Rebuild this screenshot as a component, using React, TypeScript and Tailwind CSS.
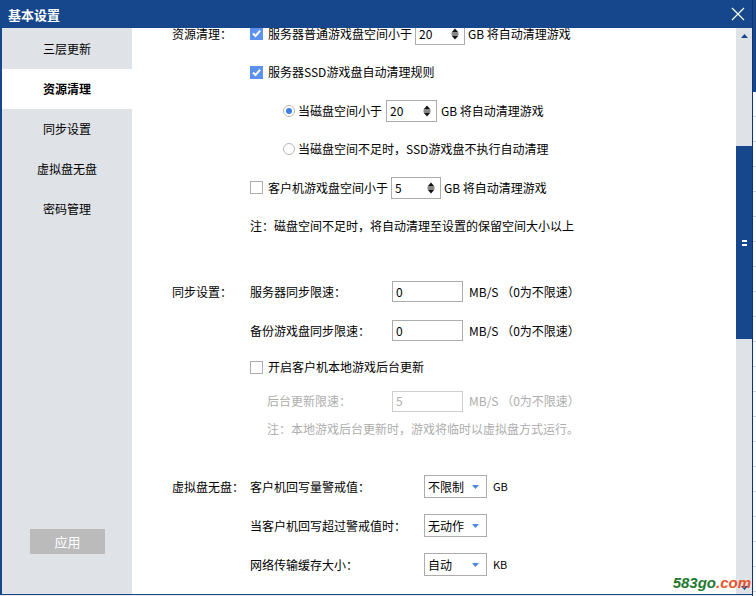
import React from 'react';

const BLUE = 'bg-[#16468b]';

function Check({ on }: { on?: boolean }) {
  if (!on) return <span className="w-[13px] h-[13px] border border-[#adadad] bg-white shrink-0" />;
  return (
    <span className="w-[13px] h-[13px] bg-[#5b92f0] flex items-center justify-center shrink-0">
      <svg width="11" height="11" viewBox="0 0 11 11">
        <path d="M2 5.5 L4.5 8 L9.2 2.6" stroke="#fff" strokeWidth="2" fill="none" />
      </svg>
    </span>
  );
}

function Radio({ on }: { on?: boolean }) {
  return (
    <span className="w-[12px] h-[12px] rounded-full border border-[#b8b8b8] bg-white flex items-center justify-center shrink-0">
      {on && <span className="w-[6px] h-[6px] rounded-full bg-[#3d7fe6]" />}
    </span>
  );
}

function Spin({ v, w }: { v: string; w: string }) {
  return (
    <div className={`${w} h-[22px] border border-[#acacac] bg-white flex items-center justify-between pl-[3px] pr-[5px] shrink-0`}>
      <span>{v}</span>
      <svg width="8" height="12" viewBox="0 0 8 12">
        <path d="M0.5 4.5 L4 0.5 L7.5 4.5Z M0.5 7.5 L7.5 7.5 L4 11.5Z" fill="#111" />
        <rect x="0.5" y="5.5" width="7" height="1" fill="#111" />
      </svg>
    </div>
  );
}

function Field({ v, dim }: { v: string; dim?: boolean }) {
  return (
    <div className={`w-[71px] h-[21px] border bg-white flex items-center pl-[3px] shrink-0 ${dim ? 'border-[#cfcfcf] text-[#adadad]' : 'border-[#acacac]'}`}>
      {v}
    </div>
  );
}

function Select({ v }: { v: string }) {
  return (
    <div className="w-[63px] h-[23px] border border-[#acacac] bg-white flex items-center justify-between pl-[3px] pr-[7px] shrink-0">
      <span>{v}</span>
      <svg width="7" height="4" viewBox="0 0 7 4">
        <path d="M0 0 H7 L3.5 4Z" fill="#4a88de" />
      </svg>
    </div>
  );
}

const menu = ['三层更新', '资源清理', '同步设置', '虚拟盘无盘', '密码管理'];

export default function App() {
  return (
    <div className="relative w-[756px] h-[596px] flex bg-[#e9e9e9] overflow-hidden text-[12px] text-black font-['Noto_Sans_CJK_SC',sans-serif] leading-none">
      <div className="w-[752px] h-[595px] flex flex-col border-l-2 border-b border-[#16468b] bg-white">
        {/* title */}
        <div className={`h-[28px] ${BLUE} flex items-center justify-between pl-[6px] pr-[7px] shrink-0`}>
          <span className="text-white font-bold text-[13px]">基本设置</span>
          <svg width="14" height="14" viewBox="0 0 14 14">
            <path d="M1 1 L13 13 M13 1 L1 13" stroke="#fff" strokeWidth="1.2" />
          </svg>
        </div>

        <div className="flex flex-1 min-h-0">
          {/* sidebar */}
          <div className="w-[130px] bg-[#dfe2e7] flex flex-col pt-[1px] shrink-0">
            {menu.map((m, i) => (
              <div
                key={m}
                className={`h-[40px] flex items-center justify-center ${i === 1 ? 'bg-white font-bold' : ''}`}
              >
                {m}
              </div>
            ))}
            <div className="mt-auto mb-[40px] ml-[28px] w-[75px] h-[25px] bg-[#bbbbbb] text-white flex items-center justify-center text-[13px]">
              应用
            </div>
          </div>

          {/* content */}
          <div className="flex-1 overflow-hidden pl-[40px]">
            <div className="-mt-[14px]">
              {/* 资源清理 */}
              <div className="flex">
                <div className="w-[78px] h-[39px] flex items-center">资源清理：</div>
                <div className="flex flex-col">
                  <div className="h-[39px] flex items-center">
                    <Check on />
                    <span className="ml-[5px]">服务器普通游戏盘空间小于</span>
                    <div className="ml-[3px]"><Spin v="20" w="w-[50px]" /></div>
                    <span className="ml-[3px]">GB 将自动清理游戏</span>
                  </div>
                  <div className="h-[38px] flex items-center">
                    <Check on />
                    <span className="ml-[5px]">服务器SSD游戏盘自动清理规则</span>
                  </div>
                  <div className="h-[39px] flex items-center pl-[33px]">
                    <Radio on />
                    <span className="ml-[3px]">当磁盘空间小于</span>
                    <div className="ml-[4px]"><Spin v="20" w="w-[51px]" /></div>
                    <span className="ml-[4px]">GB 将自动清理游戏</span>
                  </div>
                  <div className="h-[38px] flex items-center pl-[33px]">
                    <Radio />
                    <span className="ml-[3px]">当磁盘空间不足时，SSD游戏盘不执行自动清理</span>
                  </div>
                  <div className="h-[39px] flex items-center">
                    <Check />
                    <span className="ml-[5px]">客户机游戏盘空间小于</span>
                    <div className="ml-[3px]"><Spin v="5" w="w-[50px]" /></div>
                    <span className="ml-[3px]">GB 将自动清理游戏</span>
                  </div>
                  <div className="h-[38px] flex items-center">
                    注：磁盘空间不足时，将自动清理至设置的保留空间大小以上
                  </div>
                </div>
              </div>

              {/* 同步设置 */}
              <div className="flex mt-[27px]">
                <div className="w-[78px] h-[39px] flex items-center">同步设置：</div>
                <div className="flex flex-col">
                  <div className="h-[39px] flex items-center">
                    <span className="w-[142px]">服务器同步限速：</span>
                    <Field v="0" />
                    <span className="ml-[6px]">MB/S （0为不限速）</span>
                  </div>
                  <div className="h-[39px] flex items-center">
                    <span className="w-[142px]">备份游戏盘同步限速：</span>
                    <Field v="0" />
                    <span className="ml-[6px]">MB/S （0为不限速）</span>
                  </div>
                  <div className="h-[34px] flex items-center">
                    <Check />
                    <span className="ml-[5px]">开启客户机本地游戏后台更新</span>
                  </div>
                  <div className="h-[34px] flex items-center pl-[17px] text-[#adadad]">
                    <span className="w-[125px]">后台更新限速：</span>
                    <Field v="5" dim />
                    <span className="ml-[6px]">MB/S （0为不限速）</span>
                  </div>
                  <div className="h-[22px] flex items-center pl-[17px] text-[#adadad]">
                    注：本地游戏后台更新时，游戏将临时以虚拟盘方式运行。
                  </div>
                </div>
              </div>

              {/* 虚拟盘无盘 */}
              <div className="flex mt-[27px]">
                <div className="w-[78px] h-[39px] flex items-center">虚拟盘无盘：</div>
                <div className="flex flex-col">
                  <div className="h-[39px] flex items-center">
                    <span className="w-[174px]">客户机回写量警戒值：</span>
                    <Select v="不限制" />
                    <span className="ml-[6px] text-[11px]">GB</span>
                  </div>
                  <div className="h-[39px] flex items-center">
                    <span className="w-[174px]">当客户机回写超过警戒值时：</span>
                    <Select v="无动作" />
                  </div>
                  <div className="h-[39px] flex items-center">
                    <span className="w-[174px]">网络传输缓存大小：</span>
                    <Select v="自动" />
                    <span className="ml-[6px] text-[11px]">KB</span>
                  </div>
                </div>
              </div>
            </div>
          </div>

          {/* scrollbar */}
          <div className="w-[16px] bg-[#dfe2e7] flex flex-col shrink-0">
            <div className="h-[118px] flex justify-center pt-[6px]">
              <svg width="7" height="4" viewBox="0 0 7 4">
                <path d="M0 4 H7 L3.5 0Z" fill="#16468b" />
              </svg>
            </div>
            <div className={`h-[193px] ${BLUE} flex flex-col items-center justify-center gap-[2px]`}>
              <span className="w-[5px] h-[2px] bg-white" />
              <span className="w-[5px] h-[2px] bg-white" />
            </div>
            <div className="flex-1 flex items-end justify-center pb-[4px]">
              <svg width="7" height="4" viewBox="0 0 7 4">
                <path d="M0 0 H7 L3.5 4Z" fill="#16468b" />
              </svg>
            </div>
          </div>
        </div>
      </div>

      {/* neighbouring window edge */}
      <div className="w-[4px] flex flex-col border-l border-[#0f3570]">
        <div className={`h-[92px] ${BLUE}`} />
        <div className="flex-1 bg-white flex flex-col">
          {Array.from({ length: 20 }).map((_, i) => (
            <div key={i} className="h-[25px] border-b border-[#d4d4d4] shrink-0" />
          ))}
        </div>
      </div>

      {/* watermark */}
      <div className="absolute right-[5px] bottom-[6px] italic font-bold text-[15px] font-['Liberation_Sans',sans-serif] leading-none">
        <span className="text-[#1f7a30]">583go</span>
        <span className="text-[#e8552b]">.com</span>
      </div>
    </div>
  );
}
